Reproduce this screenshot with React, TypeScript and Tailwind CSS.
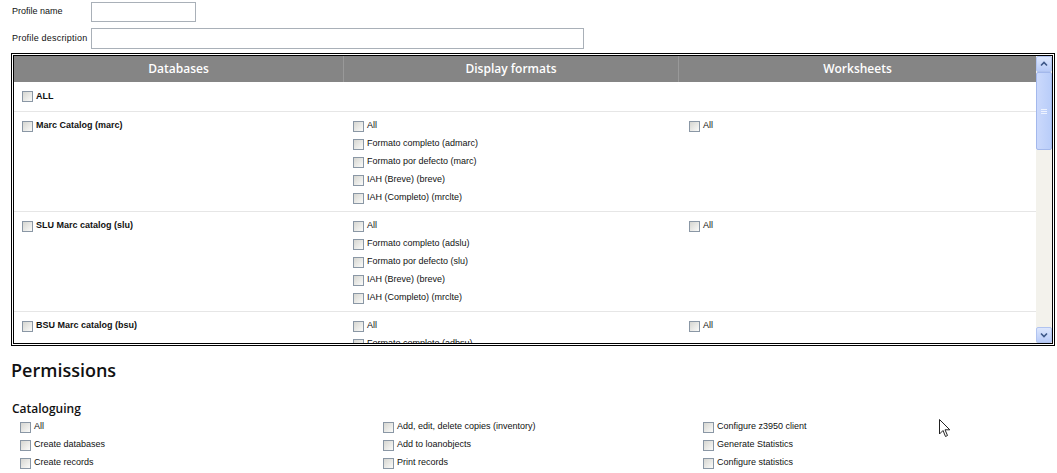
import React from "react";

const Cb = () => (
  <span className="inline-block w-[11px] h-[11px] shrink-0 border border-[#8a97a5] bg-linear-to-br from-[#d6d6d1] to-[#fbfbf9]" />
);

const Item = ({ label, bold = false }: { label: string; bold?: boolean }) => (
  <div className="flex items-center gap-[3px] h-[18px] whitespace-nowrap">
    <Cb />
    <span className={bold ? "font-bold" : ""}>{label}</span>
  </div>
);

const formats = (code: string, ad: string) => [
  "All",
  `Formato completo (${ad})`,
  `Formato por defecto (${code})`,
  "IAH (Breve) (breve)",
  "IAH (Completo) (mrclte)",
];

const dbs = [
  { name: "Marc Catalog (marc)", f: formats("marc", "admarc") },
  { name: "SLU Marc catalog (slu)", f: formats("slu", "adslu") },
  { name: "BSU Marc catalog (bsu)", f: formats("bsu", "adbsu") },
];

const cols = "grid grid-cols-[329px_335px_1fr]";

export default function App() {
  return (
    <div className="relative w-[1057px] h-[473px] overflow-hidden bg-white font-['Liberation_Sans',Arial,sans-serif] text-[9px] text-[#111]">
      {/* Profile form */}
      <div className="pl-[12px] pt-[2px] flex flex-col gap-[6px]">
        <div className="flex items-center h-[20px]">
          <span className="w-[79px] shrink-0 whitespace-nowrap">Profile name</span>
          <div className="w-[105px] h-[20px] border border-[#a9b0b8] bg-white" />
        </div>
        <div className="flex items-center h-[21px]">
          <span className="w-[79px] shrink-0 whitespace-nowrap tracking-[0.2px]">Profile description</span>
          <div className="w-[493px] h-[21px] border border-[#a9b0b8] bg-white" />
        </div>
      </div>

      {/* Table */}
      <div className="mt-[4px] ml-[11px] w-[1044px] h-[293px] border-[3px] border-double border-black flex">
        <div className="flex-1 flex flex-col overflow-hidden">
          <div className={`${cols} h-[26px] shrink-0 bg-[#858585] text-white font-['Open_Sans',sans-serif] font-semibold text-[12px]`}>
            <div className="flex items-center justify-center">Databases</div>
            <div className="flex items-center justify-center border-l border-[#999999]">Display formats</div>
            <div className="flex items-center justify-center border-l border-[#999999]">Worksheets</div>
          </div>
          <div className="flex-1 overflow-hidden">
            <div className={`${cols} h-[30px] border-b border-[#e6e6e6]`}>
              <div className="pl-[8px] flex items-center">
                <Item label="ALL" bold />
              </div>
              <div />
              <div />
            </div>
            {dbs.map((d) => (
              <div key={d.name} className={`${cols} h-[100px] shrink-0 border-b border-[#e6e6e6] pt-[5px]`}>
                <div className="pl-[8px]">
                  <Item label={d.name} bold />
                </div>
                <div className="pl-[10px]">
                  {d.f.map((f) => (
                    <Item key={f} label={f} />
                  ))}
                </div>
                <div className="pl-[11px]">
                  <Item label="All" />
                </div>
              </div>
            ))}
          </div>
        </div>
        {/* Scrollbar */}
        <div className="w-[16px] shrink-0 bg-[#f3f2ec] flex flex-col">
          <div className="h-[16px] bg-linear-to-b from-[#dde7fd] to-[#b8cbf8] border border-[#b1c4f0] rounded-[2px] flex items-center justify-center">
            <svg width="8" height="6" viewBox="0 0 8 6">
              <path d="M1 4.5 L4 1.5 L7 4.5" stroke="#3d5788" strokeWidth="1.6" fill="none" />
            </svg>
          </div>
          <div className="h-[78px] bg-linear-to-r from-[#cbd9fc] to-[#b9cdf9] border border-[#a3b8ec] rounded-[2px] flex flex-col items-center justify-center gap-[1px]">
            <div className="w-[6px] h-[1px] bg-[#eef3ff]" />
            <div className="w-[6px] h-[1px] bg-[#eef3ff]" />
            <div className="w-[6px] h-[1px] bg-[#eef3ff]" />
          </div>
          <div className="flex-1" />
          <div className="h-[16px] bg-linear-to-b from-[#dde7fd] to-[#b8cbf8] border border-[#b1c4f0] rounded-[2px] flex items-center justify-center">
            <svg width="8" height="6" viewBox="0 0 8 6">
              <path d="M1 1.5 L4 4.5 L7 1.5" stroke="#3d5788" strokeWidth="1.6" fill="none" />
            </svg>
          </div>
        </div>
      </div>

      {/* Permissions */}
      <div className="mt-[12px] pl-[11px] font-['Open_Sans',sans-serif] font-semibold text-[18px] leading-[24px] text-[#111]">
        Permissions
      </div>
      <div className="mt-[19px] pl-[12px] font-['Open_Sans',sans-serif] font-semibold text-[12px] leading-[16px] text-[#111]">
        Cataloguing
      </div>
      <div className="mt-[1px] pl-[20px] grid grid-cols-[363px_320px_1fr]">
        <div>
          <Item label="All" />
          <Item label="Create databases" />
          <Item label="Create records" />
        </div>
        <div>
          <Item label="Add, edit, delete copies (inventory)" />
          <Item label="Add to loanobjects" />
          <Item label="Print records" />
        </div>
        <div>
          <Item label="Configure z3950 client" />
          <Item label="Generate Statistics" />
          <Item label="Configure statistics" />
        </div>
      </div>

      {/* Mouse cursor */}
      <svg className="absolute left-[939px] top-[419px]" width="12" height="19" viewBox="0 0 12 19">
        <path d="M0.5 0.5 L0.5 15 L4 11.5 L6.5 17.5 L8.5 16.5 L6 10.8 L10.8 10.8 Z" fill="white" stroke="#222" strokeWidth="1" />
      </svg>
    </div>
  );
}
